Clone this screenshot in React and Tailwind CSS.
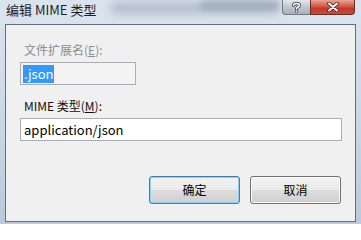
import React from "react";

const font = { fontFamily: '"Noto Sans CJK SC", "Noto Sans", sans-serif' };

export default function App() {
  return (
    <div
      className="w-[361px] h-[224px] overflow-hidden relative bg-[linear-gradient(180deg,#dbe4ee_0%,#cfdbe8_40%,#b9cadc_100%)]"
      style={font}
    >
      {/* blurred glass patches in title bar */}
      <div className="absolute left-[110px] top-[2px] w-[170px] h-[12px] rounded-full bg-[#9aa7b6] opacity-60 blur-[4px]" />
      <div className="absolute left-[200px] top-[0px] w-[80px] h-[10px] rounded-full bg-[#8796a7] opacity-50 blur-[3px]" />

      <div className="relative flex flex-col h-full">
        {/* title bar */}
        <div className="h-[24px] flex items-start justify-between pl-[6px] pr-[6px]">
          <div className="text-[13px] leading-[16px] mt-[2px] text-[#1e1e1e]">编辑 MIME 类型</div>
          <div className="flex">
            <div className="w-[28px] h-[15px] rounded-bl-[4px] border border-[#6f7a86] border-t-0 border-r-0 bg-[linear-gradient(180deg,#e3e7ec_0%,#c0c7cf_50%,#a8b0ba_100%)] flex items-center justify-center">
              <svg width="9" height="11" viewBox="0 0 9 11">
                <path d="M1.5 3.2 C1.5 1.2 7.5 0.8 7.5 3.2 C7.5 5 4.5 5 4.5 7" fill="none" stroke="#3a3f46" strokeWidth="3.2" strokeLinecap="round" />
                <circle cx="4.5" cy="9.5" r="1.6" fill="#3a3f46" />
                <path d="M1.5 3.2 C1.5 1.2 7.5 0.8 7.5 3.2 C7.5 5 4.5 5 4.5 7" fill="none" stroke="#fff" strokeWidth="1.6" strokeLinecap="round" />
                <circle cx="4.5" cy="9.5" r="0.9" fill="#fff" />
              </svg>
            </div>
            <div className="w-[45px] h-[15px] rounded-br-[4px] border border-[#6b2a24] border-t-0 bg-[linear-gradient(180deg,#e8a497_0%,#d25a48_45%,#c1392a_60%,#c94a38_100%)] flex items-center justify-center">
              <svg width="12" height="10" viewBox="0 0 12 10">
                <path d="M2 1.5 L10 8.5 M10 1.5 L2 8.5" stroke="#5a1c16" strokeWidth="3.6" strokeLinecap="round" />
                <path d="M2 1.5 L10 8.5 M10 1.5 L2 8.5" stroke="#fff" strokeWidth="2" strokeLinecap="round" />
              </svg>
            </div>
          </div>
        </div>

        {/* client area */}
        <div className="mx-[5px] mb-[2px] flex-1 border border-[#5f6f80] bg-[#f0f0f0] flex flex-col px-[14px]">
          <div className="mt-[18px] pl-[4px] text-[12px] leading-[14px] text-[#8d8d8d]">
            文件扩展名(<span className="underline">E</span>):
          </div>
          <div className="mt-[5px] w-[116px] h-[23px] border border-[#abadb3] bg-[#f3f3f3] flex items-center pl-[2px]">
            <span className="bg-[#3399ff] text-white text-[13px] leading-[18px] px-[1px]">.json</span>
          </div>
          <div className="mt-[14px] pl-[4px] text-[12px] leading-[14px] text-[#111]">
            MIME 类型(<span className="underline">M</span>):
          </div>
          <div className="mt-[5px] w-[322px] h-[23px] border border-[#abadb3] bg-white flex items-center pl-[3px] text-[13px] text-black">
            application/json
          </div>
          <div className="mt-[35px] flex justify-end gap-[10px]">
            <div className="w-[91px] h-[28px] rounded-[3px] border border-[#3c7fb1] shadow-[inset_0_0_0_1px_#8fd0f5] bg-[linear-gradient(180deg,#f2f2f2_0%,#ebebeb_50%,#dddddd_51%,#cfcfcf_100%)] flex items-center justify-center text-[12px] text-black">
              确定
            </div>
            <div className="w-[91px] h-[28px] rounded-[3px] border border-[#707070] shadow-[inset_0_0_0_1px_#fcfcfc] bg-[linear-gradient(180deg,#f2f2f2_0%,#ebebeb_50%,#dddddd_51%,#cfcfcf_100%)] flex items-center justify-center text-[12px] text-black">
              取消
            </div>
          </div>
        </div>
      </div>
    </div>
  );
}
